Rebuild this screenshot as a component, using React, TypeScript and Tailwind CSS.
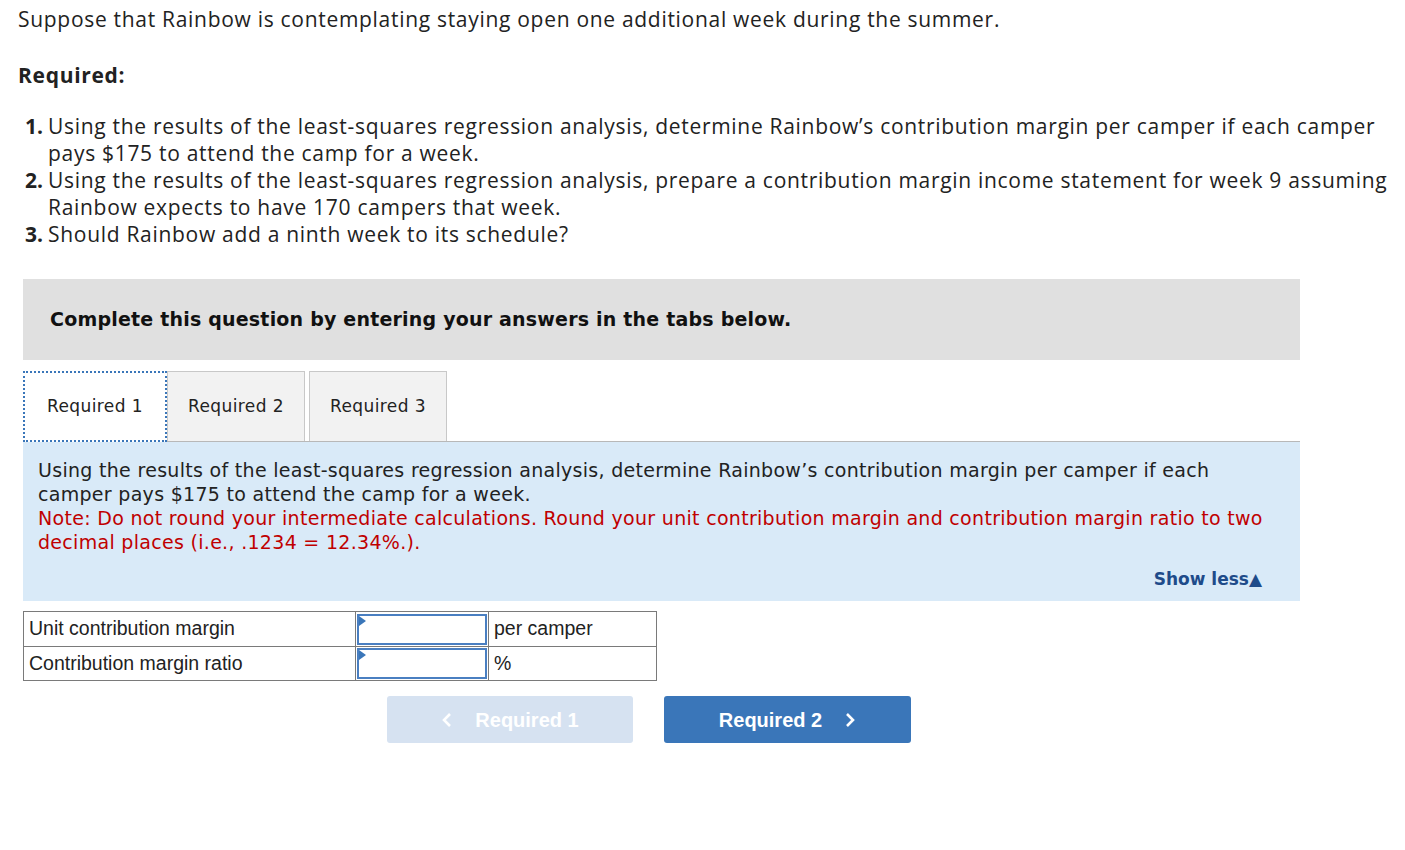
import React from 'react';

const bodyFont = "font-['Open_Sans',sans-serif] text-[21px] tracking-[0.7px]";

function InputCell() {
  return (
    <td className="relative border border-[#7a7a7a] p-0 w-[133px]">
      <div className="relative m-[1px] h-[31px] border-2 border-[#4a7fc1] bg-white">
        <div className="absolute left-0 top-0 h-0 w-0 border-y-[5px] border-l-[7px] border-y-transparent border-l-[#3a76b9]" />
      </div>
    </td>
  );
}

export default function App() {
  return (
    <div className="min-h-[850px] bg-white text-[#222] pl-[18px] pt-[6px]">
      <p className={`${bodyFont} leading-[27px]`}>
        Suppose that Rainbow is contemplating staying open one additional week during the summer.
      </p>
      <p className={`${bodyFont} mt-[29px] font-bold leading-[27px]`}>Required:</p>
      <ol className={`${bodyFont} mt-[24px] leading-[27px]`}>
        {[
          "Using the results of the least-squares regression analysis, determine Rainbow’s contribution margin per camper if each camper pays $175 to attend the camp for a week.",
          "Using the results of the least-squares regression analysis, prepare a contribution margin income statement for week 9 assuming Rainbow expects to have 170 campers that week.",
          "Should Rainbow add a ninth week to its schedule?",
        ].map((t, i) => (
          <li key={i} className="flex">
            <span className="w-[30px] shrink-0 pl-[7px] font-bold tracking-normal">{i + 1}.</span>
            <span className="pr-[4px]">{t}</span>
          </li>
        ))}
      </ol>

      <div className="mt-[31px] ml-[5px] w-[1277px]">
        <div className="flex h-[81px] items-center bg-[#e0e0e0] pl-[27px]">
          <span className="font-['DejaVu_Sans',sans-serif] text-[19px] font-bold tracking-[0.2px] text-[#111]">
            Complete this question by entering your answers in the tabs below.
          </span>
        </div>

        <div className="mt-[11px] flex items-end border-b border-[#b8b8b8] font-['DejaVu_Sans',sans-serif] text-[17px] tracking-[0.4px] text-[#222]">
          <div className="flex h-[71px] w-[144px] items-center justify-center border-2 border-dotted border-[#3a76b9] bg-white -mb-px">
            Required 1
          </div>
          <div className="flex h-[70px] w-[138px] items-center justify-center border border-b-0 border-[#c8c8c8] bg-[#f2f2f2]">
            Required 2
          </div>
          <div className="ml-[4px] flex h-[70px] w-[138px] items-center justify-center border border-b-0 border-[#c8c8c8] bg-[#f2f2f2]">
            Required 3
          </div>
        </div>

        <div className="bg-[#d9eaf8] pl-[15px] pr-[20px] pt-[16px] pb-[12px] font-['DejaVu_Sans',sans-serif] text-[19px] tracking-[0.3px] leading-[24px]">
          <p className="text-[#222]">
            Using the results of the least-squares regression analysis, determine Rainbow’s contribution margin per camper if each camper pays $175 to attend the camp for a week.
          </p>
          <p className="text-[#c00000]">
            Note: Do not round your intermediate calculations. Round your unit contribution margin and contribution margin ratio to two decimal places (i.e., .1234 = 12.34%.).
          </p>
          <div className="mt-[15px] flex h-[20px] items-center justify-end pr-[18px]">
            <span className="font-['DejaVu_Sans',sans-serif] text-[17px] font-bold tracking-normal text-[#1e4b8a]">
              Show less▲
            </span>
          </div>
        </div>
      </div>

      <table className="mt-[10px] ml-[5px] border-collapse font-['Liberation_Sans',sans-serif] text-[19.5px] text-[#222]">
        <tbody>
          <tr className="h-[35px]">
            <td className="w-[332px] border border-[#7a7a7a] px-[5px]">Unit contribution margin</td>
            <InputCell />
            <td className="w-[168px] border border-[#7a7a7a] px-[5px]">per camper</td>
          </tr>
          <tr className="h-[34px]">
            <td className="border border-[#7a7a7a] px-[5px]">Contribution margin ratio</td>
            <InputCell />
            <td className="border border-[#7a7a7a] px-[5px]">%</td>
          </tr>
        </tbody>
      </table>

      <div className="mt-[15px] ml-[369px] flex gap-[31px] font-['Liberation_Sans',sans-serif] text-[20px] font-bold text-white">
        <button className="flex h-[47px] w-[246px] items-center justify-center gap-[22px] rounded-[3px] bg-[#d6e2f1]">
          <svg width="12" height="16" viewBox="0 0 12 16" fill="none" stroke="white" strokeWidth="2.6">
            <path d="M9 2 3 8l6 6" />
          </svg>
          <span>Required 1</span>
        </button>
        <button className="flex h-[47px] w-[247px] items-center justify-center gap-[22px] rounded-[3px] bg-[#3a76b9]">
          <span>Required 2</span>
          <svg width="12" height="16" viewBox="0 0 12 16" fill="none" stroke="white" strokeWidth="2.6">
            <path d="M3 2l6 6-6 6" />
          </svg>
        </button>
      </div>
    </div>
  );
}
